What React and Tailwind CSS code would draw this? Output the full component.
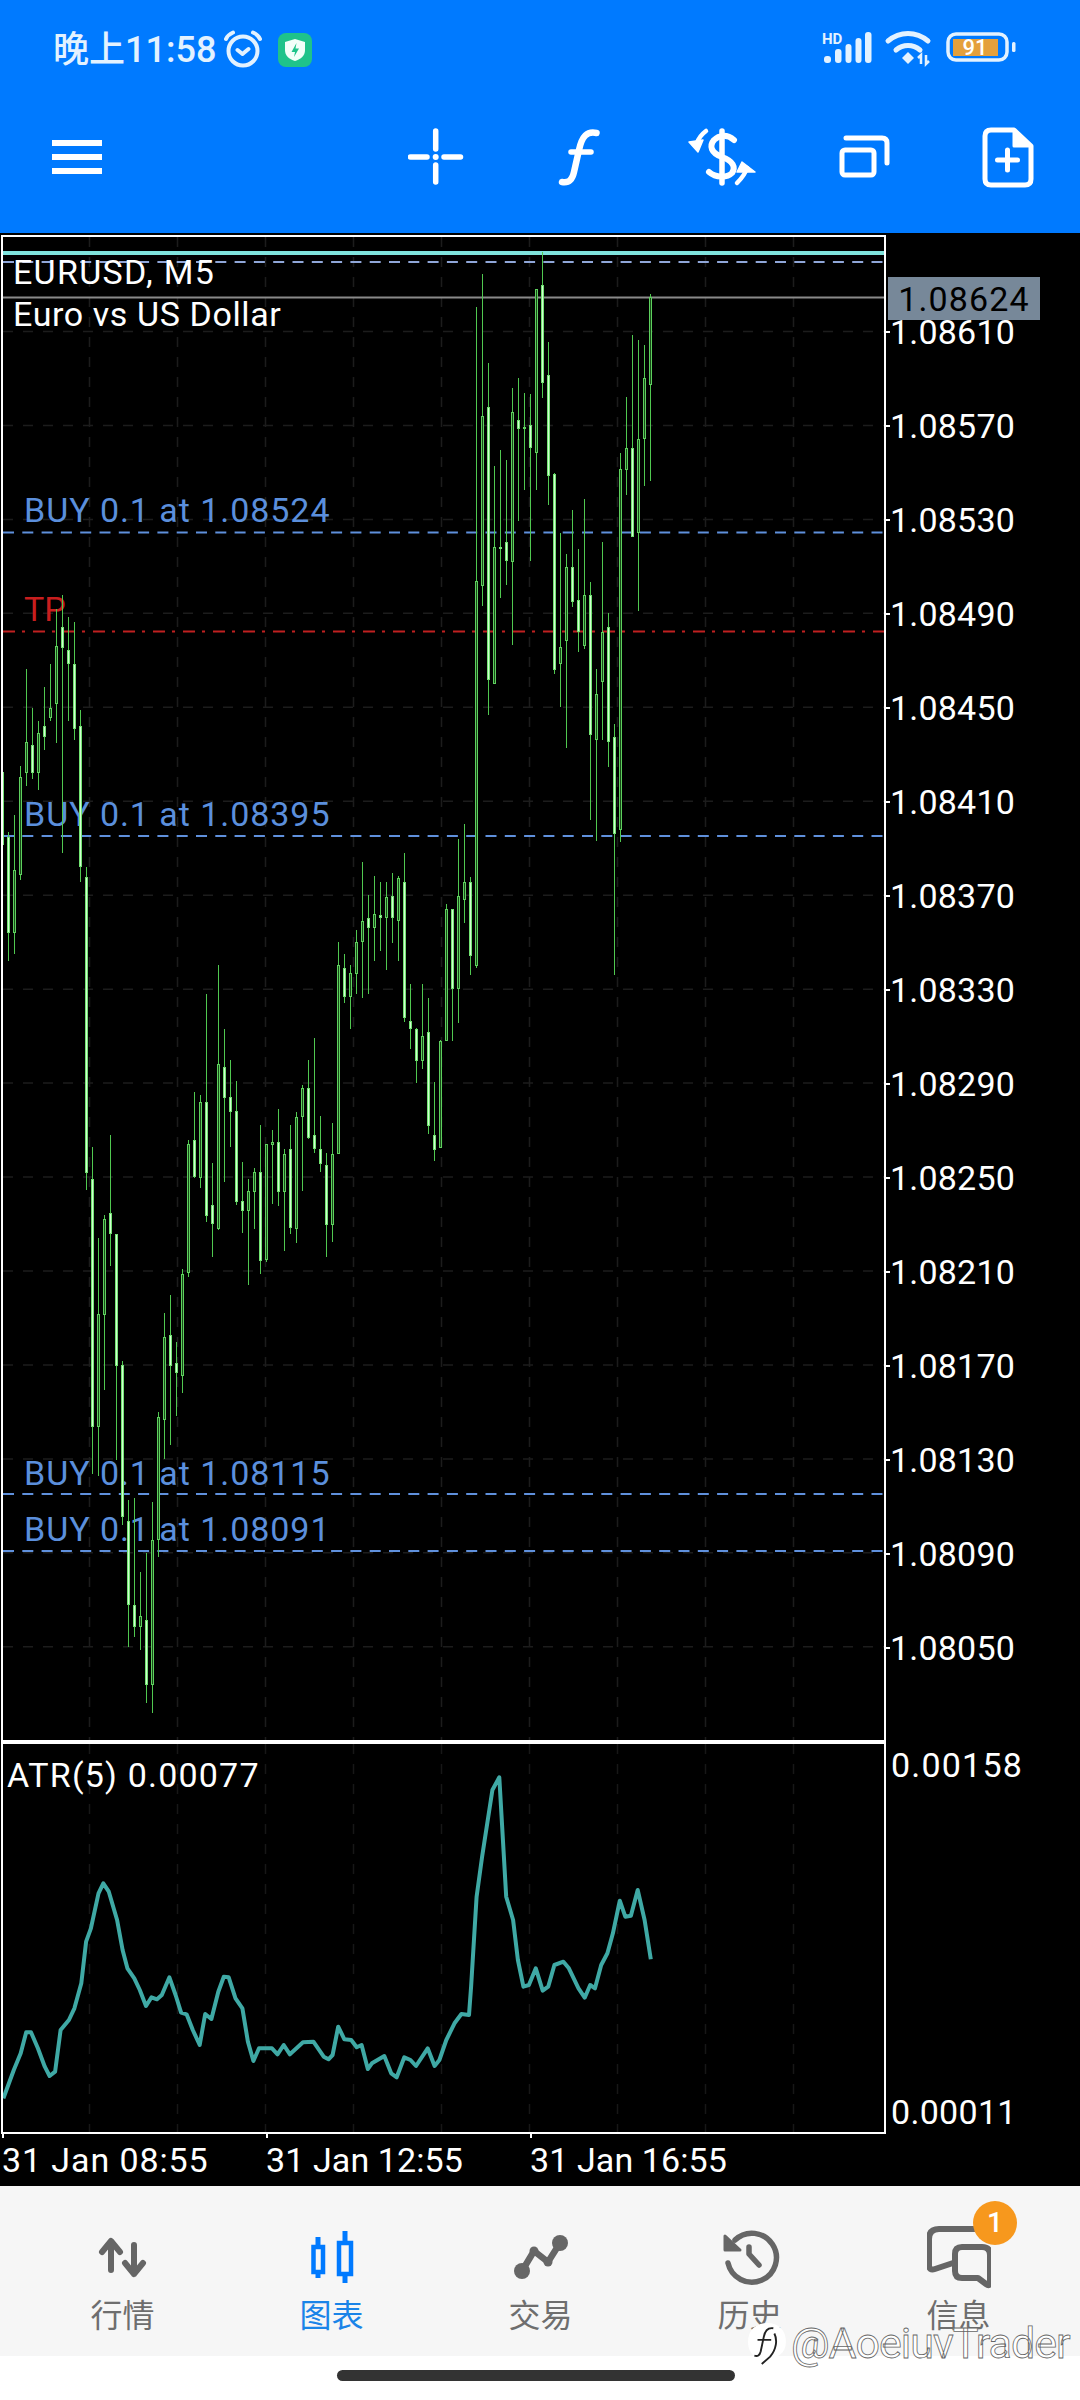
import React from "react";

const C = [
[770,772,845,850,1],[832,837,933,961,1],[815,870,933,954,0],[766,777,875,880,0],[669,742,773,786,0],[708,745,773,779,1],[721,733,773,790,0],[687,726,737,750,1],[664,708,718,721,0],[609,646,704,743,0],[595,627,648,853,1],[617,650,664,721,1],[622,664,729,740,1],[710,726,867,882,1],[867,877,1173,1190,1],[1147,1179,1427,1474,1],[1238,1314,1427,1476,0],[1215,1219,1315,1390,0],[1135,1213,1234,1266,1],[1234,1234,1366,1460,1],[1361,1365,1517,1525,1],[1500,1521,1605,1647,1],[1498,1605,1627,1637,1],[1572,1616,1627,1650,0],[1553,1620,1685,1703,1],[1502,1540,1685,1713,0],[1412,1417,1540,1557,0],[1313,1337,1420,1459,0],[1295,1335,1366,1445,1],[1342,1363,1373,1416,1],[1269,1274,1376,1393,0],[1140,1144,1273,1277,0],[1092,1140,1177,1178,1],[1095,1102,1178,1188,0],[994,1102,1216,1222,1],[1163,1205,1224,1257,1],[965,1064,1229,1230,0],[1029,1067,1098,1182,1],[1060,1097,1112,1147,1],[1081,1111,1202,1205,1],[1162,1201,1211,1233,1],[1179,1191,1211,1285,0],[1168,1172,1192,1229,0],[1125,1172,1261,1274,1],[1144,1144,1260,1262,0],[1130,1142,1145,1204,0],[1109,1142,1192,1206,1],[1149,1154,1192,1251,0],[1125,1149,1228,1234,1],[1112,1117,1229,1243,0],[1085,1088,1117,1191,0],[1060,1088,1138,1139,1],[1038,1135,1149,1153,1],[1116,1149,1164,1172,1],[1153,1165,1225,1257,1],[1123,1154,1225,1242,0],[942,965,1154,1154,0],[954,968,997,1003,1],[965,973,997,1029,0],[930,942,974,994,0],[862,921,942,998,0],[895,918,928,994,1],[876,914,928,961,0],[882,915,918,951,1],[882,897,918,970,0],[873,896,918,943,1],[876,878,921,961,0],[853,882,1018,1022,1],[984,1021,1029,1049,1],[1028,1029,1061,1083,1],[984,1036,1061,1069,0],[998,1032,1126,1134,1],[1082,1135,1150,1161,1],[1040,1041,1148,1148,0],[904,909,1041,1041,0],[909,909,989,1041,1],[839,896,989,1023,0],[824,882,900,923,0],[877,882,956,975,1],[307,581,966,968,0],[274,416,586,606,0],[363,407,680,715,1],[466,547,684,684,0],[450,547,548,598,1],[460,542,561,585,1],[388,412,562,645,0],[378,420,429,521,1],[393,427,429,490,0],[394,425,448,561,1],[289,289,453,490,0],[252,285,383,398,1],[342,375,476,505,1],[473,474,670,674,1],[533,647,664,707,0],[554,567,641,748,0],[510,567,602,607,1],[549,600,632,652,1],[499,595,646,649,0],[582,595,735,820,1],[669,694,740,841,0],[542,632,682,740,0],[613,627,742,767,1],[724,737,834,975,1],[453,469,830,842,0],[397,448,470,495,0],[335,448,537,537,1],[340,439,533,611,0],[345,378,439,486,0],[294,297,385,481,0],
];

const ATR = [[5,1135],[20,1050],[30,1000],[38,937],[45,937],[55,985],[65,1040],[72,1068],[80,1055],[88,930],[100,900],[108,865],[118,790],[125,665],[132,625],[143,520],[150,490],[158,515],[170,600],[178,690],[185,745],[195,775],[203,810],[212,858],[220,832],[228,838],[235,825],[246,772],[255,825],[263,878],[271,883],[280,930],[290,975],[298,882],[307,897],[317,815],[325,770],[332,772],[342,835],[352,865],[360,965],[368,1023],[376,985],[395,985],[403,1003],[412,975],[421,1003],[440,967],[455,965],[470,1010],[477,1018],[483,1005],[491,920],[500,958],[510,960],[518,982],[525,975],[534,1047],[540,1030],[558,1008],[568,1060],[576,1072],[587,1012],[596,1020],[604,1038],[621,985],[631,1038],[638,1020],[648,960],[660,910],[670,882],[681,885],[684,800],[692,530],[700,410],[715,210],[725,172],[735,530],[745,600],[752,720],[760,800],[768,795],[778,745],[788,812],[796,800],[805,735],[818,725],[826,745],[840,805],[849,833],[857,795],[864,805],[873,735],[882,700],[890,640],[900,542],[908,590],[916,587],[926,510],[936,600],[945,718]];

const PRICES = ["1.08610","1.08570","1.08530","1.08490","1.08450","1.08410","1.08370","1.08330","1.08290","1.08250","1.08210","1.08170","1.08130","1.08090","1.08050"];
const VGRID = [89.5,177.5,265.5,353.5,441.5,529.5,617.5,705.5,793.5];

function MainLines() {
  return (
    <svg width="881" height="1503" viewBox="3 237 881 1503" className="block">
      {PRICES.map((_, i) => (
        <line key={i} x1="3" x2="884" y1={331.5 + i * 93.95} y2={331.5 + i * 93.95} stroke="#1c1c1c" strokeWidth="1.5" strokeDasharray="10 10" />
      ))}
      {VGRID.map((x) => (
        <line key={x} x1={x} x2={x} y1="237" y2="1740" stroke="#1c1c1c" strokeWidth="1.5" strokeDasharray="10 10" />
      ))}
      <rect x="3" y="251" width="881" height="4" fill="#7fe3dc" />
      <line x1="3" x2="884" y1="262" y2="262" stroke="#8fa6d8" strokeWidth="2" strokeDasharray="11 8.3" />
      <rect x="3" y="296.5" width="881" height="2" fill="#8a8a8a" />
      {[532.5, 836, 1494, 1551].map((y) => (
        <line key={y} x1="3" x2="884" y1={y} y2={y} stroke="#5f90dc" strokeWidth="2" strokeDasharray="11 8.3" />
      ))}
      <line x1="3" x2="884" y1="631.5" y2="631.5" stroke="#c02020" strokeWidth="2" strokeDasharray="12 7 3 8" />
    </svg>
  );
}

function Candles() {
  return (
    <svg width="881" height="1503" viewBox="3 237 881 1503" shapeRendering="crispEdges" className="absolute left-0 top-0 block">
      {C.map((c, i) => {
        const x = 2 + 6 * i;
        const [h, t, b, l, f] = c;
        const bh = Math.max(b - t, 2);
        return (
          <g key={i}>
            <rect x={x} y={h} width="1" height={l - h} fill="#50c850" />
            <rect x={x - 1} y={t} width="3" height={bh} fill={f ? "#72e272" : "#5ed05e"} />
            {bh > 2 && <rect x={x} y={t + 1} width="1" height={bh - 2} fill={f ? "#d2ffd2" : "#184a18"} />}
          </g>
        );
      })}
    </svg>
  );
}

function AtrChart() {
  const pts = ATR.map(([x, y]) => `${(x / 1.452).toFixed(1)},${(1720 + y / 3).toFixed(1)}`).join(" ");
  return (
    <svg width="881" height="388" viewBox="3 1744 881 388" className="block">
      {VGRID.map((x) => (
        <line key={x} x1={x} x2={x} y1="1744" y2="2132" stroke="#171717" strokeWidth="1.5" strokeDasharray="10 10" />
      ))}
      <polyline points={pts} fill="none" stroke="#3fa9a5" strokeWidth="4" strokeLinejoin="round" />
    </svg>
  );
}

function NavIcon({ cx, children }) {
  return (
    <svg width="64" height="64" viewBox={`${cx - 32} 2226 64 64`} className="block">
      {children}
    </svg>
  );
}

function NavItem({ cx, label, active, children, badge }) {
  return (
    <div className="relative flex w-[209px] flex-col items-center pt-[40px]">
      <NavIcon cx={cx}>{children}</NavIcon>
      <div className={`mt-[8px] text-[32px] leading-[36px] ${active ? "text-[#1a84e8]" : "text-[#6e6e6e]"}`}>{label}</div>
      {badge}
    </div>
  );
}

function Tool({ x, w, className, children }) {
  return (
    <svg width={w} height="64" viewBox={`${x} 125 ${w} 64`} className={`block ${className}`} fill="none" stroke="#fff" strokeLinecap="round" strokeLinejoin="round">
      {children}
    </svg>
  );
}

export default function App() {
  const labelBlue = "absolute left-[21px] text-[34px] leading-none tracking-[0.95px] text-[#5b8fdc]";
  return (
    <div className="relative flex h-[2400px] w-[1080px] flex-col overflow-hidden bg-white font-['Roboto','Noto_Sans_CJK_SC',sans-serif]">
      {/* header */}
      <header className="flex h-[233px] flex-col bg-[#007aff]">
        <div className="flex h-[100px] items-center pl-[53px] pr-[62px]">
          <span className="text-[36px] font-medium leading-none text-[#e3f2ff]">晚上11:58</span>
          <svg width="40" height="40" viewBox="222 33 40 40" className="ml-[7px] block" fill="none" stroke="#e3f2ff" strokeWidth="4" strokeLinecap="round" strokeLinejoin="round">
            <circle cx="242" cy="54" r="14.5" />
            <path d="M225 42c1.5-3.5 3.5-5 7-6.5M259 42c-1.500-3.500-3.500-5-7-6.500M236.500 53l5 4 6-5" />
          </svg>
          <svg width="34" height="34" viewBox="0 0 34 34" className="ml-[15px] block">
            <rect width="34" height="34" rx="8" fill="#1fc38a" />
            <path d="M17 6l10 3v8c0 6-4 9-10 11C11 26 7 23 7 17V9z" fill="#f2fff9" />
            <path d="M18.500 10l-5 9h3.500l-1 5 5-8.500h-3.500z" fill="#1fc38a" />
          </svg>
          <svg width="198" height="44" viewBox="820 30 198 44" className="ml-auto block">
            <text x="822" y="46" fontSize="15" fontWeight="700" fill="#e3f2ff" fontFamily="Roboto">HD</text>
            <g fill="#e3f2ff">
              <rect x="824" y="58" width="7" height="7" rx="3" />
              <rect x="835" y="51" width="6.500" height="14" rx="3" />
              <rect x="845.500" y="46" width="6" height="19" rx="3" />
              <rect x="855.500" y="40" width="6" height="25" rx="3" />
              <rect x="865" y="34" width="6.500" height="31" rx="3" />
              <path d="M902 60l6-6 6 6-6 6z" />
              <path d="M921 66v-9l-3 3M926 57v9l3-3" fill="none" stroke="#e3f2ff" strokeWidth="2.500" />
            </g>
            <g fill="none" stroke="#e3f2ff" strokeWidth="5" strokeLinecap="round">
              <path d="M888 43c12-10 28-10 40 0" />
              <path d="M896 52c7-6 17-6 24 0" />
            </g>
            <rect x="948" y="36" width="59" height="26" rx="8" fill="none" stroke="#e3f2ff" strokeWidth="3.500" />
            <rect x="953" y="41" width="45" height="17" fill="#e4a03c" />
            <rect x="1012" y="44" width="3.500" height="10" rx="1.500" fill="#e3f2ff" />
            <text x="975" y="57" fontSize="22" textAnchor="middle" fontWeight="500" fill="#fff" fontFamily="Roboto">91</text>
          </svg>
        </div>
        <div className="flex h-[114px] items-center pl-[52px]">
          <div className="flex w-[50px] flex-col gap-[8px]">
            <div className="h-[6px] bg-white" />
            <div className="h-[6px] bg-white" />
            <div className="h-[6px] bg-white" />
          </div>
          <Tool x={408} w={56} className="ml-[306px]">
            <path d="M410.500 157H427M444 157H460.500M435.700 131V149M435.700 165V182" strokeWidth="5.500" />
            <circle cx="435.700" cy="157" r="3" fill="#fff" stroke="none" />
          </Tool>
          <Tool x={558} w={44} className="ml-[94px]">
            <path d="M596.500 133C587 131 582 136 579 150L574 172C572 181 568 183 562 182" strokeWidth="6.500" />
            <path d="M571 152H591" strokeWidth="5.500" />
          </Tool>
          <Tool x={686} w={72} className="ml-[84px]">
            <path d="M722 131V183" strokeWidth="5.500" />
            <path d="M734 140C727 134 719 135 714 140C709 146 711 153 722 157C733 161 736 167 732 173C727 178 716 178 709 172" strokeWidth="6" />
            <path d="M706 131C702 134 699 137 697 143" strokeWidth="4.500" />
            <path d="M689 142L703 140L698 152Z" fill="#fff" strokeWidth="1.500" />
            <path d="M737 183C741 179 745 175 747 168" strokeWidth="4.500" />
            <path d="M755 172L742 162L737 172Z" fill="#fff" strokeWidth="1.500" />
          </Tool>
          <Tool x={838} w={52} className="ml-[80px]">
            <rect x="842" y="150" width="32" height="25" rx="3" strokeWidth="5" />
            <path d="M846 138H882Q887 138 887 143V163" strokeWidth="5" />
          </Tool>
          <Tool x={982} w={52} className="ml-[92px]">
            <path d="M991 130H1014L1031 146V179Q1031 185 1025 185H991Q985 185 985 179V136Q985 130 991 130Z" strokeWidth="5" />
            <path d="M1014 130V146H1031" fill="#fff" strokeWidth="3" />
            <path d="M1007.500 150V170M997.500 160H1017.500" strokeWidth="5" />
          </Tool>
        </div>
      </header>

      {/* chart area */}
      <main className="flex h-[1953px] flex-col bg-black pt-[2px] text-white">
        <div className="flex">
          <div className="ml-[1px] w-[885px]">
            <div className="relative h-[1509px] border-x-2 border-t-2 border-b-4 border-white">
              <MainLines />
              <div className="absolute left-[10px] top-[18px] text-[34px] leading-none tracking-[1.3px]">EURUSD, M5</div>
              <div className="absolute left-[10px] top-[60px] text-[34px] leading-none tracking-[0.6px]">Euro vs US Dollar</div>
              <div className={`${labelBlue} top-[256px]`}>BUY 0.1 at 1.08524</div>
              <div className="absolute left-[21px] top-[355px] text-[34px] leading-none text-[#c81e1e]">TP</div>
              <div className={`${labelBlue} top-[560px]`}>BUY 0.1 at 1.08395</div>
              <div className={`${labelBlue} top-[1219px]`}>BUY 0.1 at 1.08115</div>
              <div className={`${labelBlue} top-[1275px]`}>BUY 0.1 at 1.08091</div>
              <Candles />
            </div>
            <div className="relative h-[390px] border-x-2 border-b-2 border-white">
              <AtrChart />
              <div className="absolute left-[4px] top-[14px] text-[34px] leading-none tracking-[1.2px]">ATR(5) 0.00077</div>
            </div>
          </div>
          <div className="relative flex flex-1 flex-col">
            <div className="flex h-[1509px] flex-col pt-[50px]">
              {PRICES.map((p) => (
                <div key={p} className="flex h-[94px] items-center">
                  <div className="h-[2px] w-[4px] bg-white" />
                  <div className="text-[34px] leading-none tracking-[0.2px]">{p}</div>
                </div>
              ))}
            </div>
            <div className="absolute left-[2px] top-[42px] flex h-[43px] w-[152px] items-center justify-center bg-[#778899] text-[34px] leading-none tracking-[1.1px] text-black">1.08624</div>
            <div className="flex h-[390px] flex-col justify-between pb-[5px] pl-[5px] pt-[4px]">
              <div className="text-[34px] leading-none tracking-[1.2px]">0.00158</div>
              <div className="text-[34px] leading-none tracking-[0.3px]">0.00011</div>
            </div>
          </div>
        </div>
        <div className="flex pl-[2px]">
          <div className="w-[264px]">
            <div className="h-[4px] w-[2px] bg-white" />
            <div className="mt-[5px] text-[34px] leading-none tracking-[0.9px]">31 Jan 08:55</div>
          </div>
          <div className="w-[264px]">
            <div className="h-[4px] w-[2px] bg-white" />
            <div className="mt-[5px] text-[34px] leading-none tracking-[0.1px]">31 Jan 12:55</div>
          </div>
          <div className="w-[264px]">
            <div className="h-[4px] w-[2px] bg-white" />
            <div className="mt-[5px] text-[34px] leading-none tracking-[0.1px]">31 Jan 16:55</div>
          </div>
        </div>
      </main>

      {/* bottom navigation */}
      <nav className="flex h-[170px] bg-[#f6f6f6] pl-[18px]">
        <NavItem cx={122} label="行情">
          <path d="M110 2270V2242M101 2252L110 2241L119 2252" fill="none" stroke="#666" strokeWidth="6" strokeLinejoin="round" strokeLinecap="round" />
          <path d="M133 2245V2274M124 2263L133 2274L142 2263" fill="none" stroke="#666" strokeWidth="6" strokeLinejoin="round" strokeLinecap="round" />
        </NavItem>
        <NavItem cx={331} label="图表" active>
          <path d="M317 2237V2278M344 2231V2283" stroke="#007aff" strokeWidth="5" />
          <rect x="312.500" y="2247" width="9.500" height="25" fill="#f6f6f6" stroke="#007aff" strokeWidth="4.500" />
          <rect x="338" y="2243" width="12" height="31" fill="#f6f6f6" stroke="#007aff" strokeWidth="4.500" />
        </NavItem>
        <NavItem cx={540} label="交易">
          <path d="M521 2271L533 2251L547 2262L559 2243" fill="none" stroke="#666" strokeWidth="6.500" strokeLinecap="round" strokeLinejoin="round" />
          <circle cx="521" cy="2271" r="8" fill="#666" />
          <circle cx="559" cy="2243" r="8" fill="#666" />
          <circle cx="533" cy="2251" r="4.500" fill="#666" />
          <circle cx="547" cy="2262" r="4.500" fill="#666" />
        </NavItem>
        <NavItem cx={749} label="历史">
          <path d="M734 2240A24.500 24.500 0 1 1 727 2263" fill="none" stroke="#666" strokeWidth="5.500" strokeLinecap="round" />
          <path d="M724 2236V2250H739Z" fill="#666" stroke="#666" strokeWidth="3" strokeLinejoin="round" />
          <path d="M748 2247V2254L758 2265" fill="none" stroke="#666" strokeWidth="5.500" strokeLinecap="round" strokeLinejoin="round" />
        </NavItem>
        <NavItem
          cx={958}
          label="信息"
          badge={
            <div className="absolute left-[119px] top-[15px] flex h-[44px] w-[44px] items-center justify-center rounded-full bg-[#f7981d] text-[28px] font-medium leading-none text-white">1</div>
          }
        >
          <path d="M975 2229H938Q928 2229 928 2239V2265Q928 2271 934 2269L952 2263" fill="none" stroke="#666" strokeWidth="6" strokeLinecap="round" strokeLinejoin="round" />
          <path d="M961 2247H981Q989 2247 989 2255V2282Q989 2287 985 2284L977 2278H961Q954 2278 954 2271V2254Q954 2247 961 2247Z" fill="none" stroke="#666" strokeWidth="6" strokeLinejoin="round" />
        </NavItem>
      </nav>

      {/* home indicator */}
      <div className="flex flex-1 justify-center pr-[8px] pt-[14px]">
        <div className="h-[11px] w-[398px] rounded-full bg-[#333]" />
      </div>

      {/* watermark */}
      <div className="absolute left-[747px] top-[2320px] flex items-center gap-[4px]">
        <svg width="40" height="46" viewBox="0 0 38 42" className="block">
          <path d="M19 2C30 2 37 9 37 20C37 31 28 36 18 36L10 41L8 34C3 31 1 26 1 20C1 9 8 2 19 2Z" fill="#fff" />
          <path d="M25 7C19 6 17 10 16 15L13 29C12 33 10 34 7 33M10 18H23M26 12C29 18 28 27 22 34L14 41" fill="none" stroke="#222" strokeWidth="1.800" />
        </svg>
        <span className="text-[43px] leading-none tracking-[-1px] text-white [-webkit-text-stroke:0.8px_#666]">@AoeiuvTrader</span>
      </div>
    </div>
  );
}
